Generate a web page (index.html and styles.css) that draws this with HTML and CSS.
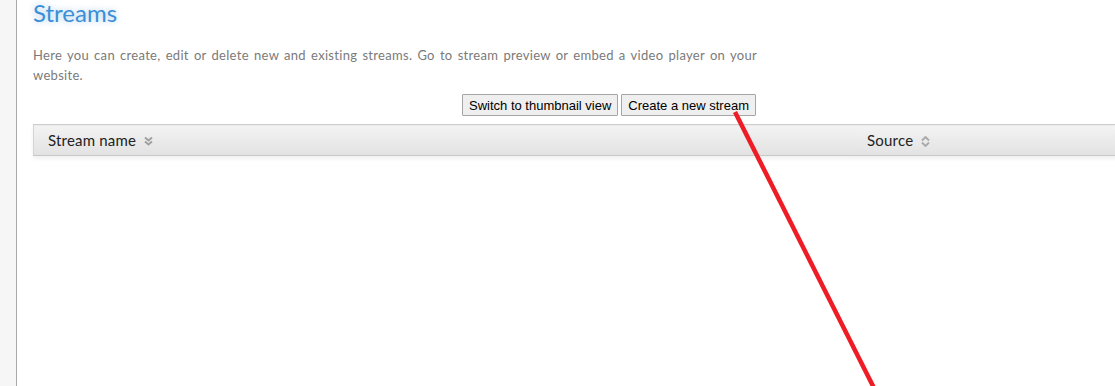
FILE: index.html
```html
<!DOCTYPE html>
<html lang="en">
<head>
  <meta charset="UTF-8">
  <title>Streams</title>
  <link rel="stylesheet" href="styles.css">
</head>
<body>
  <div class="page">
    <div class="sidebar"></div>
    <div class="content">
      <h1>Streams</h1>
      <div class="intro">
        <p>Here you can create, edit or delete new and existing streams. Go to stream preview or embed a video player on your website.</p>
        <div class="actions">
          <button>Switch to thumbnail view</button>
          <button>Create a new stream</button>
        </div>
      </div>
      <table class="streams">
        <thead>
          <tr>
            <th class="col-name">Stream name <span class="sort sort-down"></span></th>
            <th class="col-source">Source <span class="sort sort-both"></span></th>
          </tr>
        </thead>
      </table>
    </div>
  </div>
  <svg class="mark" width="1115" height="386" viewBox="0 0 1115 386">
    <line x1="735" y1="112" x2="874" y2="388" stroke="#ee1c25" stroke-width="4.5"/>
  </svg>
</body>
</html>
```

FILE: styles.css
```css
html, body {
  margin: 0;
  height: 100%;
  overflow: hidden;
  background: #ffffff;
}
.page {
  display: flex;
  height: 100%;
}
.sidebar {
  width: 16px;
  flex: none;
  background: #f6f6f6;
  border-right: 1px solid #a8a8a8;
}
.content {
  flex: none;
  width: 1120px;
  padding-left: 16px;
  font-family: "Lato", "DejaVu Sans", sans-serif;
}
h1 {
  margin: 0;
  font-size: 24px;
  font-weight: normal;
  line-height: 26px;
  color: #3a8fd6;
  text-shadow: 0 0 6px rgba(58, 143, 214, 0.45);
}
.intro {
  width: 724px;
}
.intro p {
  margin: 19px 0 0;
  font-size: 13px;
  letter-spacing: 0.3px;
  line-height: 20px;
  color: #7a7a7a;
  text-align: justify;
}
.actions {
  display: flex;
  justify-content: flex-end;
  gap: 3px;
  margin: 9px 1px 0 0;
}
button {
  font-family: "Liberation Sans", Arial, sans-serif;
  font-size: 13px;
  height: 22px;
  padding: 0 6px;
  color: #000;
  background: #efefef;
  border: 1px solid #a5a5a5;
  border-radius: 1px;
}
.streams {
  margin-top: 8px;
  width: 1100px;
  border-collapse: collapse;
  box-shadow: 0 3px 4px rgba(0, 0, 0, 0.06);
}
.streams th {
  height: 30px;
  padding: 0 0 0 14px;
  text-align: left;
  font-size: 15px;
  letter-spacing: 0.2px;
  font-weight: normal;
  color: #222;
  background: linear-gradient(#f3f3f3, #e2e2e2);
  border-top: 1px solid #cdcdcd;
  border-bottom: 1px solid #c8c8c8;
}
.streams th:first-child {
  border-left: 1px solid #d4d4d4;
}
.col-name {
  width: 805px;
}
.sort {
  display: inline-block;
  width: 9px;
  height: 11px;
  margin-left: 4px;
  vertical-align: -1px;
  background-repeat: no-repeat;
}
.sort-down {
  background-image: url("data:image/svg+xml,%3Csvg xmlns='http://www.w3.org/2000/svg' width='9' height='11'%3E%3Cpath d='M1 1.5l3.5 3 3.5-3M1 5.5l3.5 3 3.5-3' fill='none' stroke='%23a0a0a0' stroke-width='1.9'/%3E%3C/svg%3E");
}
.sort-both {
  background-image: url("data:image/svg+xml,%3Csvg xmlns='http://www.w3.org/2000/svg' width='9' height='11'%3E%3Cpath d='M1 4.5l3.5-3.5 3.5 3.5M1 6.5l3.5 3.5 3.5-3.5' fill='none' stroke='%23aaaaaa' stroke-width='1.9'/%3E%3C/svg%3E");
}
.mark {
  position: absolute;
  left: 0;
  top: 0;
  pointer-events: none;
}
```
